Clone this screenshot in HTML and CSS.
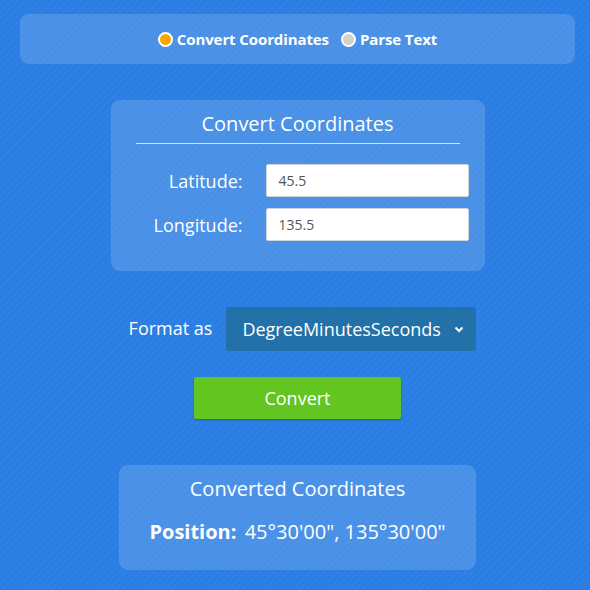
FILE: index.html
```html
<!DOCTYPE html>
<html lang="en">
<head>
<meta charset="utf-8">
<title>Coordinate Converter</title>
<link rel="stylesheet" href="styles.css">
</head>
<body>
<main class="page">
  <nav class="modebar">
    <label class="mode"><span class="radio radio-on"></span>Convert Coordinates</label>
    <label class="mode"><span class="radio radio-off"></span>Parse Text</label>
  </nav>

  <section class="card input-card">
    <h2 class="card-title">Convert Coordinates</h2>
    <div class="fields">
      <span class="field-label">Latitude:</span>
      <div class="field-input">45.5</div>
      <span class="field-label">Longitude:</span>
      <div class="field-input">135.5</div>
    </div>
  </section>

  <div class="format-row">
    <span class="format-label">Format as</span>
    <div class="select">
      <span>DegreeMinutesSeconds</span>
      <svg class="chevron" width="10" height="7" viewBox="0 0 10 7"><path d="M1.5 1.5 L5 5 L8.5 1.5" fill="none" stroke="#fff" stroke-width="2"/></svg>
    </div>
  </div>

  <button class="convert-btn">Convert</button>

  <section class="card result-card">
    <h2 class="card-title">Converted Coordinates</h2>
    <p class="position"><strong>Position:</strong> 45°30'00", 135°30'00"</p>
  </section>
</main>
</body>
</html>
```

FILE: styles.css
```css
html, body {
  margin: 0;
  padding: 0;
}
body {
  background-color: #2a7ee3;
  background-image: repeating-linear-gradient(-45deg, rgba(255,255,255,0.025) 0 2px, rgba(0,0,0,0) 2px 5px);
  font-family: "Open Sans", "Noto Sans", sans-serif;
  color: #fff;
  height: 590px;
}
.page {
  margin: 0 15px 0 20px;
  padding-top: 14px;
  display: flex;
  flex-direction: column;
  align-items: center;
}
.modebar {
  align-self: stretch;
  height: 50px;
  border-radius: 9px;
  background: rgba(255,255,255,0.15);
  display: flex;
  justify-content: center;
  align-items: center;
  gap: 12px;
  font-weight: 700;
  font-size: 15px;
  letter-spacing: -0.1px;
}
.mode {
  display: flex;
  align-items: center;
  gap: 4px;
}
.radio {
  width: 11px;
  height: 11px;
  border-radius: 50%;
  border: 2px solid #fff;
  display: inline-block;
}
.radio-on { background: #fba500; }
.radio-off { background: #d2d2cd; }

.card {
  background: rgba(255,255,255,0.15);
  border-radius: 9px;
  box-sizing: border-box;
}
.card-title {
  margin: 0;
  font-size: 20px;
  font-weight: 400;
  line-height: 26px;
  text-align: center;
}
.input-card {
  margin-top: 36px;
  width: 374px;
  height: 171px;
  padding: 11px 25px 0 25px;
}
.input-card .card-title {
  padding-bottom: 6px;
  border-bottom: 1px solid rgba(255,255,255,0.75);
}
.fields {
  margin-top: 20px;
  display: grid;
  grid-template-columns: 107px 203px;
  column-gap: 23px;
  row-gap: 11px;
  align-items: center;
}
.field-label {
  text-align: right;
  font-size: 18px;
}
.field-input {
  height: 33px;
  box-sizing: border-box;
  background: #fff;
  border: 1px solid #cfd4da;
  border-radius: 2px;
  color: #555;
  font-size: 14px;
  line-height: 32px;
  padding-left: 12px;
}

.format-row {
  margin-top: 36px;
  display: flex;
  align-items: center;
  gap: 14px;
  margin-left: 10px;
}
.format-label {
  font-size: 18px;
  padding-bottom: 3px;
}
.select {
  width: 250px;
  height: 44px;
  box-sizing: border-box;
  background: #2271a8;
  border-radius: 3px;
  display: flex;
  align-items: center;
  justify-content: space-between;
  padding: 0 12px 0 16px;
  font-size: 18px;
}
.chevron { display: block; }

.convert-btn {
  margin-top: 26px;
  width: 207px;
  height: 42px;
  border: none;
  border-radius: 2px;
  background: #63c51f;
  color: #fff;
  font-family: inherit;
  font-size: 18px;
  box-shadow: 0 1px 2px rgba(0,0,0,0.25);
}

.result-card {
  margin-top: 46px;
  width: 357px;
  height: 105px;
  padding-top: 11px;
}
.position {
  margin: 17px 0 0;
  text-align: center;
  font-size: 20px;
  line-height: 26px;
}
.position strong { margin-right: 3px; }
```
